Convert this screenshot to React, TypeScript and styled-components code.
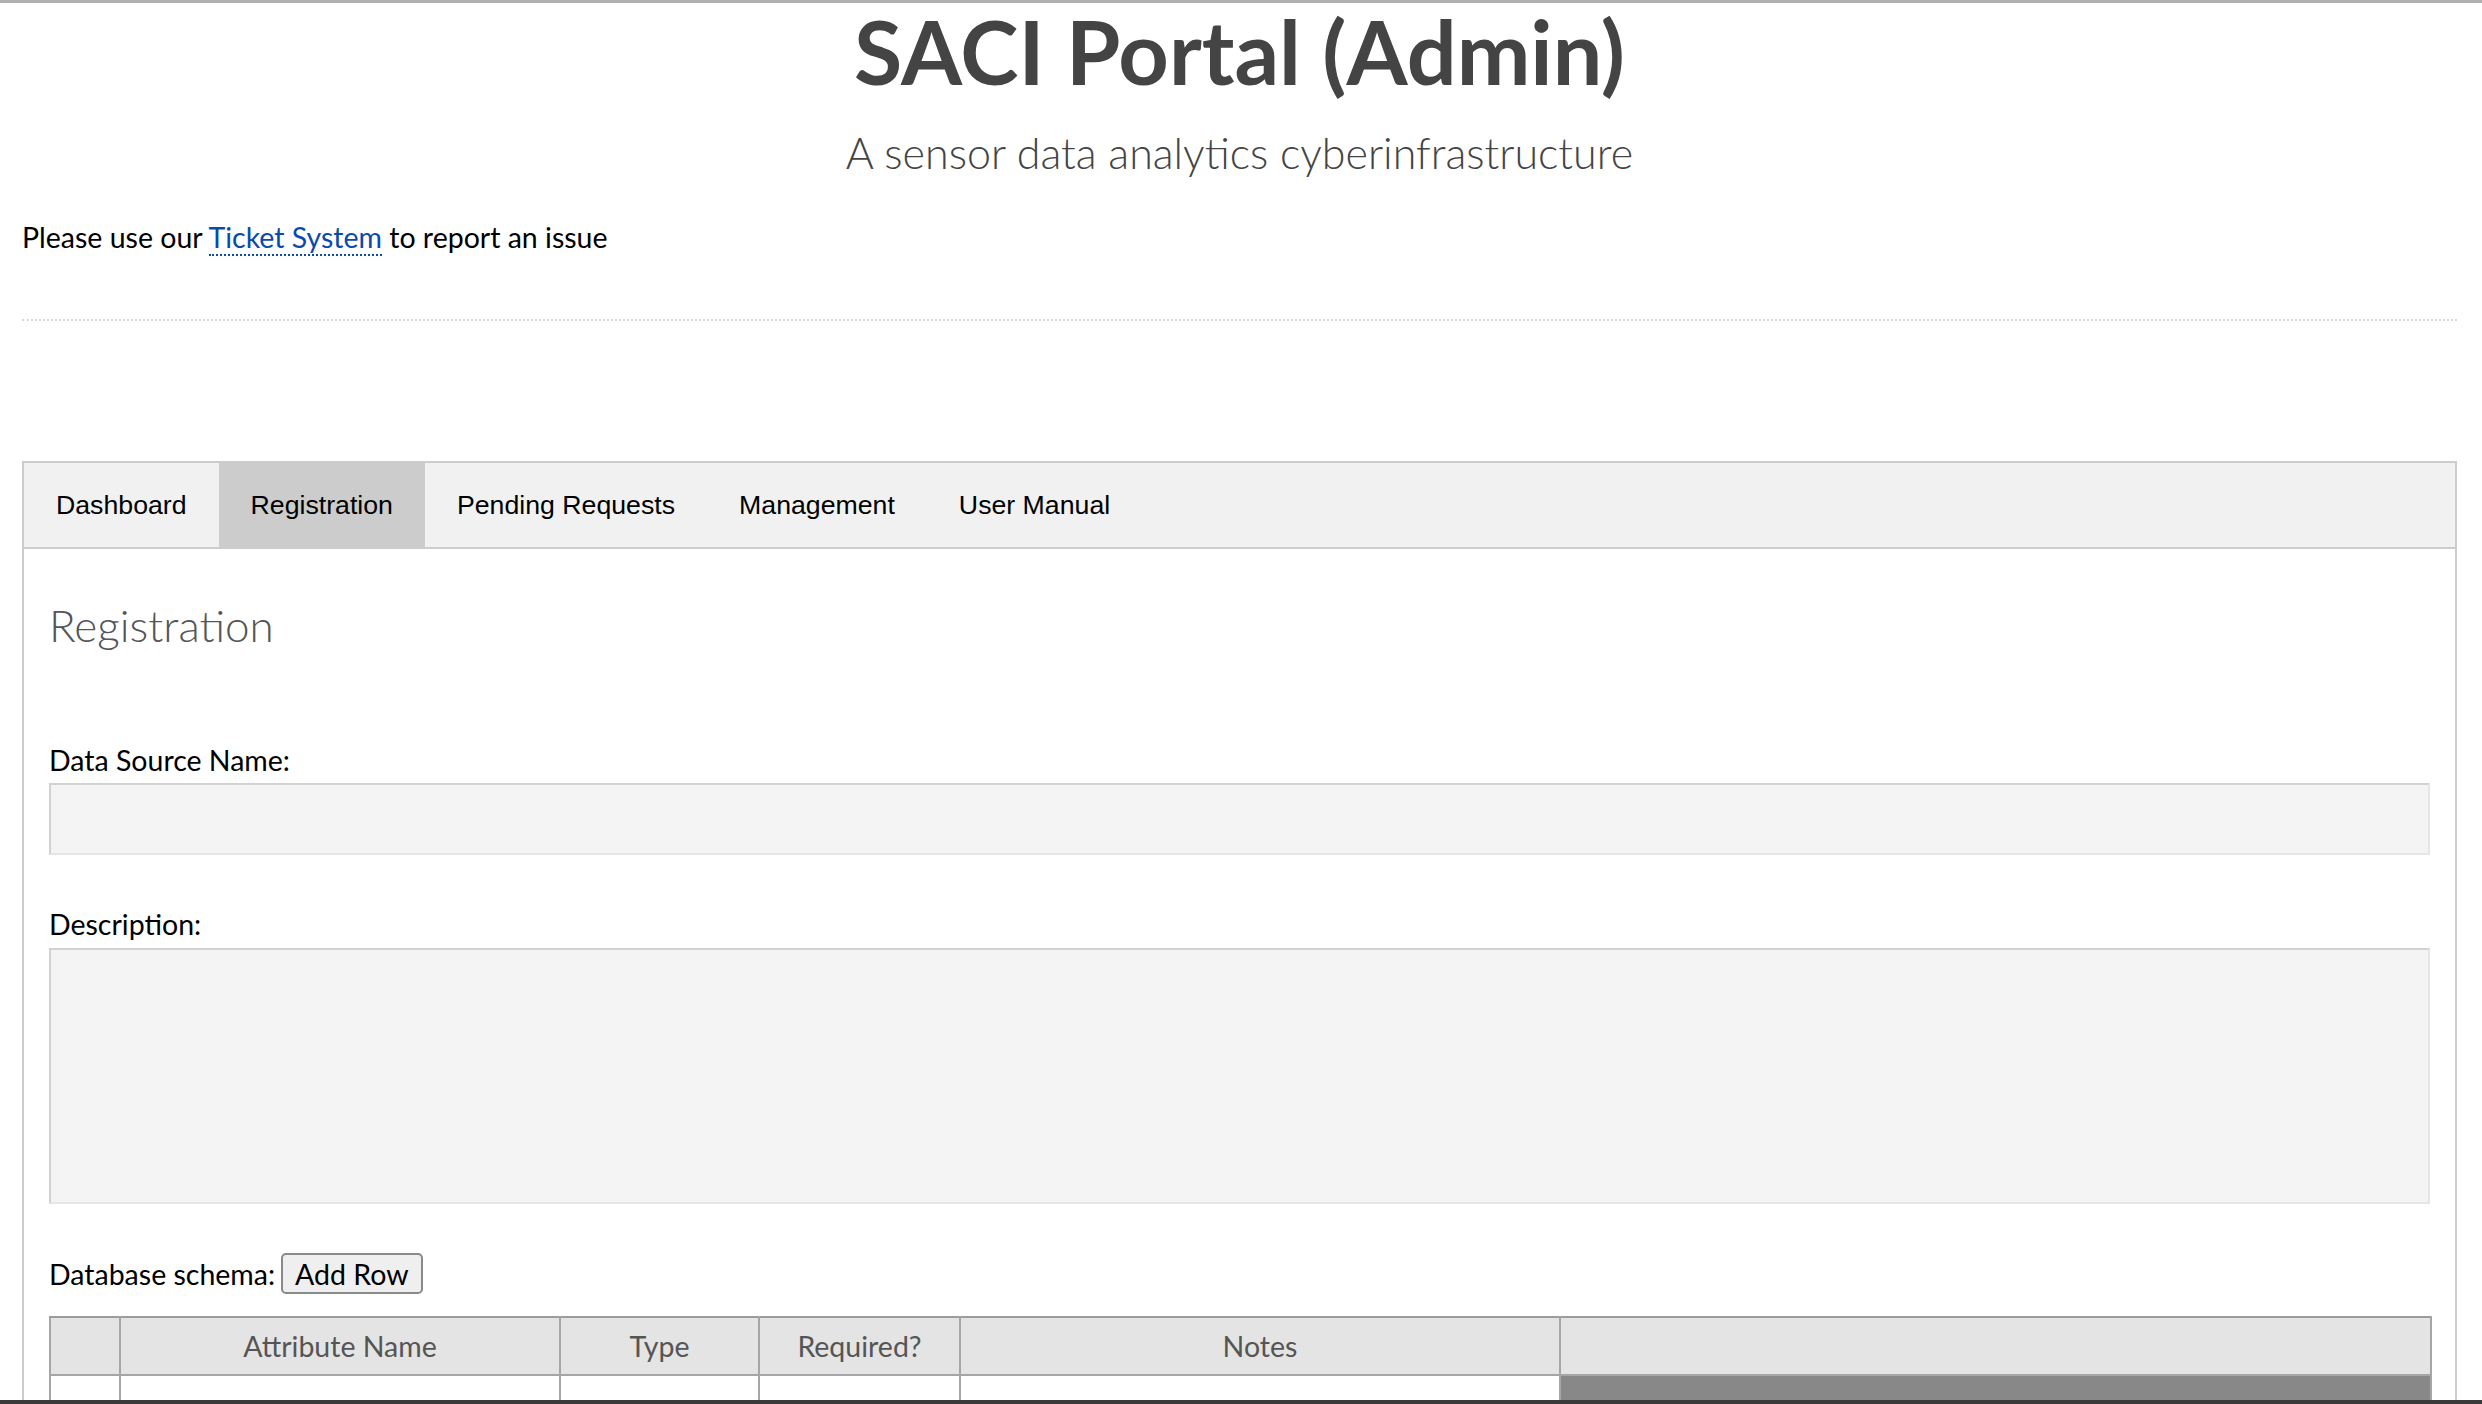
import React from "react";
import styled, { createGlobalStyle } from "styled-components";

const GlobalStyle = createGlobalStyle`
  html, body {
    margin: 0;
    padding: 0;
    overflow: hidden;
    background: #fff;
  }
  body {
    font-family: Lato, "Open Sans", sans-serif;
    color: #000;
  }
`;

const Page = styled.div`
  border-top: 3px solid #b0b0b0;
  padding: 0 25px 0 22px;
`;

const Title = styled.h1`
  margin: 0;
  text-align: center;
  font-family: Lato, sans-serif;
  font-weight: 700;
  font-size: 88px;
  line-height: 96px;
  color: #444;
`;

const Subtitle = styled.p`
  margin: 28px 0 0;
  text-align: center;
  font-family: Lato, sans-serif;
  font-weight: 300;
  font-size: 43px;
  line-height: 52px;
  color: #444;
`;

const Notice = styled.p`
  margin: 41px 0 0;
  font-size: 28.5px;
  line-height: 34px;
`;

const TicketLink = styled.a`
  color: #0b4aa8;
  text-decoration: none;
  border-bottom: 2px dotted #0b4aa8;
`;

const Rule = styled.hr`
  margin: 65px 0 0;
  border: 0;
  border-top: 2px dotted #d8d8d8;
`;

const TabBar = styled.nav`
  margin-top: 140px;
  display: flex;
  height: 84px;
  background: #f1f1f1;
  border: 2px solid #ccc;
`;

const Tab = styled.button<{ $active?: boolean }>`
  display: flex;
  align-items: center;
  padding: 0 32px;
  border: 0;
  background: ${(p) => (p.$active ? "#ccc" : "transparent")};
  font-family: "Liberation Sans", Arial, sans-serif;
  font-size: 26.7px;
  color: #000;
  cursor: pointer;
`;

const Panel = styled.section`
  border: 2px solid #ccc;
  border-top: 0;
  padding: 0 25px 80px;
`;

const Heading = styled.h2`
  margin: 0;
  padding-top: 50px;
  font-family: Lato, sans-serif;
  font-weight: 300;
  font-size: 44px;
  line-height: 52px;
  color: #555;
`;

const Label = styled.label<{ $gap: number }>`
  display: block;
  margin-top: ${(p) => p.$gap}px;
  font-size: 28.5px;
  line-height: 34px;
`;

const fieldStyle = `
  display: block;
  width: 100%;
  box-sizing: border-box;
  background: #f4f4f4;
  border: 2px solid;
  border-color: #d2d2d2 #e6e6e6 #e6e6e6 #d2d2d2;
  font-family: Lato, sans-serif;
  font-size: 28px;
  outline: none;
`;

const TextInput = styled.input`
  ${fieldStyle}
  margin-top: 6px;
  height: 72px;
`;

const TextArea = styled.textarea`
  ${fieldStyle}
  margin-top: 7px;
  height: 256px;
  resize: none;
`;

const SchemaRow = styled.div`
  display: flex;
  align-items: center;
  gap: 6px;
  margin-top: 49px;
  font-size: 28.5px;
  line-height: 34px;
`;

const AddButton = styled.button`
  height: 41px;
  padding: 0 12px;
  background: #efefef;
  border: 2px solid #8a8a8a;
  border-radius: 5px;
  font-family: Lato, sans-serif;
  font-size: 28.5px;
  color: #000;
`;

const Table = styled.table`
  margin-top: 22px;
  width: 100%;
  table-layout: fixed;
  border-collapse: collapse;
  border: 2px solid #9c9c9c;
`;

const Col = styled.col<{ $w: number }>`
  width: ${(p) => p.$w}px;
`;

const Th = styled.th`
  height: 56px;
  padding: 0;
  background: #e4e4e4;
  border: 2px solid #a6a6a6;
  border-top-color: #9c9c9c;
  font-family: Lato, sans-serif;
  font-weight: 400;
  font-size: 28.5px;
  color: #555;
  text-align: center;
`;

const Td = styled.td<{ $filled?: boolean }>`
  height: 60px;
  border: 2px solid #a6a6a6;
  background: ${(p) => (p.$filled ? "#888" : "#fff")};
`;

const BottomEdge = styled.div`
  position: fixed;
  left: 0;
  right: 0;
  bottom: 0;
  height: 4px;
  background: #3a3a3a;
`;

const tabs = ["Dashboard", "Registration", "Pending Requests", "Management", "User Manual"];
const columns = [
  { w: 70, label: "" },
  { w: 440, label: "Attribute Name" },
  { w: 199, label: "Type" },
  { w: 201, label: "Required?" },
  { w: 600, label: "Notes" },
  { w: 871, label: "" },
];

export default function App() {
  return (
    <>
      <GlobalStyle />
      <Page>
        <Title>SACI Portal (Admin)</Title>
        <Subtitle>A sensor data analytics cyberinfrastructure</Subtitle>
        <Notice>
          Please use our <TicketLink href="#">Ticket System</TicketLink> to report an issue
        </Notice>
        <Rule />

        <TabBar>
          {tabs.map((t) => (
            <Tab key={t} $active={t === "Registration"}>
              {t}
            </Tab>
          ))}
        </TabBar>

        <Panel>
          <Heading>Registration</Heading>
          <Label $gap={92}>Data Source Name:</Label>
          <TextInput type="text" />
          <Label $gap={52}>Description:</Label>
          <TextArea />
          <SchemaRow>
            <span>Database schema:</span>
            <AddButton type="button">Add Row</AddButton>
          </SchemaRow>
          <Table>
            <colgroup>
              {columns.map((c, i) => (
                <Col key={i} $w={c.w} />
              ))}
            </colgroup>
            <thead>
              <tr>
                {columns.map((c, i) => (
                  <Th key={i}>{c.label}</Th>
                ))}
              </tr>
            </thead>
            <tbody>
              <tr>
                {columns.map((c, i) => (
                  <Td key={i} $filled={i === columns.length - 1} />
                ))}
              </tr>
            </tbody>
          </Table>
        </Panel>
      </Page>
      <BottomEdge />
    </>
  );
}
